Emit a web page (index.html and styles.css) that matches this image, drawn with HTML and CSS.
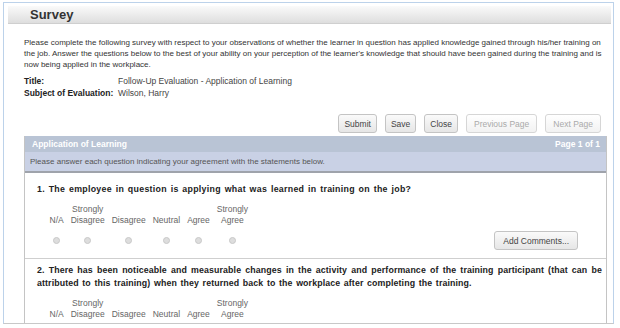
FILE: index.html
```html
<!DOCTYPE html>
<html>
<head>
<meta charset="UTF-8">
<title>Survey</title>
<link rel="stylesheet" href="styles.css">
</head>
<body>

<div class="frame">
  <div class="titlebar"><h1>Survey</h1></div>

  <div class="content">
    <p class="intro">Please complete the following survey with respect to your observations of whether the learner in question has applied knowledge gained through his/her training on the job. Answer the questions below to the best of your ability on your perception of the learner's knowledge that should have been gained during the training and is now being applied in the workplace.</p>

    <table class="info">
      <tr><th>Title:</th><td>Follow-Up Evaluation - Application of Learning</td></tr>
      <tr><th>Subject of Evaluation:</th><td>Wilson, Harry</td></tr>
    </table>

    <div class="toolbar">
      <button class="btn">Submit</button>
      <button class="btn">Save</button>
      <button class="btn">Close</button>
      <button class="btn off">Previous Page</button>
      <button class="btn off">Next Page</button>
    </div>

    <div class="panel">
      <div class="panel-head">
        <span>Application of Learning</span>
        <span>Page 1 of 1</span>
      </div>
      <div class="panel-sub">Please answer each question indicating your agreement with the statements below.</div>

      <div class="question first">
        <div class="qtext">1. The employee in question is applying what was learned in training on the job?</div>
        <div class="answers">
          <table class="scale">
            <tr>
              <td>N/A</td><td>Strongly<br>Disagree</td><td>Disagree</td><td>Neutral</td><td>Agree</td><td>Strongly<br>Agree</td>
            </tr>
            <tr class="radios">
              <td><i></i></td><td><i></i></td><td><i></i></td><td><i></i></td><td><i></i></td><td><i></i></td>
            </tr>
          </table>
          <button class="btn comment">Add Comments...</button>
        </div>
      </div>

      <div class="question">
        <div class="qtext tight">2. There has been noticeable and measurable changes in the activity and performance of the training participant (that can be attributed to this training) when they returned back to the workplace after completing the training.</div>
        <div class="answers">
          <table class="scale">
            <tr>
              <td>N/A</td><td>Strongly<br>Disagree</td><td>Disagree</td><td>Neutral</td><td>Agree</td><td>Strongly<br>Agree</td>
            </tr>
          </table>
        </div>
      </div>
    </div>
  </div>
</div>

</body>
</html>
```

FILE: styles.css
```css
body { margin:0; background:#fff; font-family:"Liberation Sans", Arial, sans-serif; color:#333; }
.frame { margin:2px 0 0 3px; width:609px; height:320px; border:1px solid #bcd2ea; border-bottom-color:#c8c8c8; overflow:hidden; }
.titlebar { margin:3px 2px 0 4px; height:17px; background:linear-gradient(#fafafa, #dedede); border-bottom:1px solid #cfcfcf; }
.titlebar h1 { margin:0; padding-left:22px; font-size:13px; line-height:17px; color:#333; }
.content { padding:0 6px 0 20px; }
.intro { margin:13px 0 5px; font-size:8px; line-height:11px; color:#333; }
.info { border-collapse:collapse; font-size:8.5px; }
.info th { text-align:left; padding:0; width:94px; line-height:12px; color:#222; }
.info td { padding:0; color:#444; line-height:12px; }
.toolbar { display:flex; justify-content:flex-end; gap:8px; margin:15px 6px 3px 0; }
.btn { height:19px; padding:0 5px; font-family:"Liberation Sans", Arial, sans-serif; font-size:8.5px; color:#444; background:linear-gradient(#fafafa, #e6e6e6); border:1px solid #c4c4c4; border-radius:3px; }
.btn.off { color:#aaa; background:linear-gradient(#fff, #f2f2f2); border-color:#d6d6d6; padding:0 7px; }
.panel { border-left:1px solid #c4c4c4; border-right:1px solid #c4c4c4; }
.panel-head { display:flex; justify-content:space-between; height:16px; padding:0 6px 0 7px; background:#b9c4d5; color:#fff; font-size:8.5px; font-weight:bold; line-height:16px; }
.panel-sub { height:19px; padding-left:5px; background:#c9d1e5; border-bottom:2px solid #9fa3ab; color:#555; font-size:8px; line-height:19px; }
.question { padding:5px 4px 14px 12px; border-bottom:1px solid #cfcfcf; }
.question.first { padding-top:10px; }
.qtext { font-size:8.8px; font-weight:bold; line-height:13px; letter-spacing:0.3px; word-spacing:1px; color:#222; text-align:justify; }
.qtext.tight { letter-spacing:0.12px; }
.answers { display:flex; align-items:flex-end; justify-content:space-between; padding:8px 24px 0 9px; }
.scale { border-collapse:collapse; font-size:8.5px; color:#666; }
.scale td { padding:0 3.5px; text-align:center; vertical-align:bottom; line-height:11px; }
.radios td { padding-top:11px; line-height:7px; }
.radios i { display:inline-block; vertical-align:top; width:7px; height:7px; border-radius:50%; background:#ddd; border:1px solid #c8c8c8; box-sizing:border-box; }
.comment { margin-bottom:-6px; padding:0 8px; }
```
